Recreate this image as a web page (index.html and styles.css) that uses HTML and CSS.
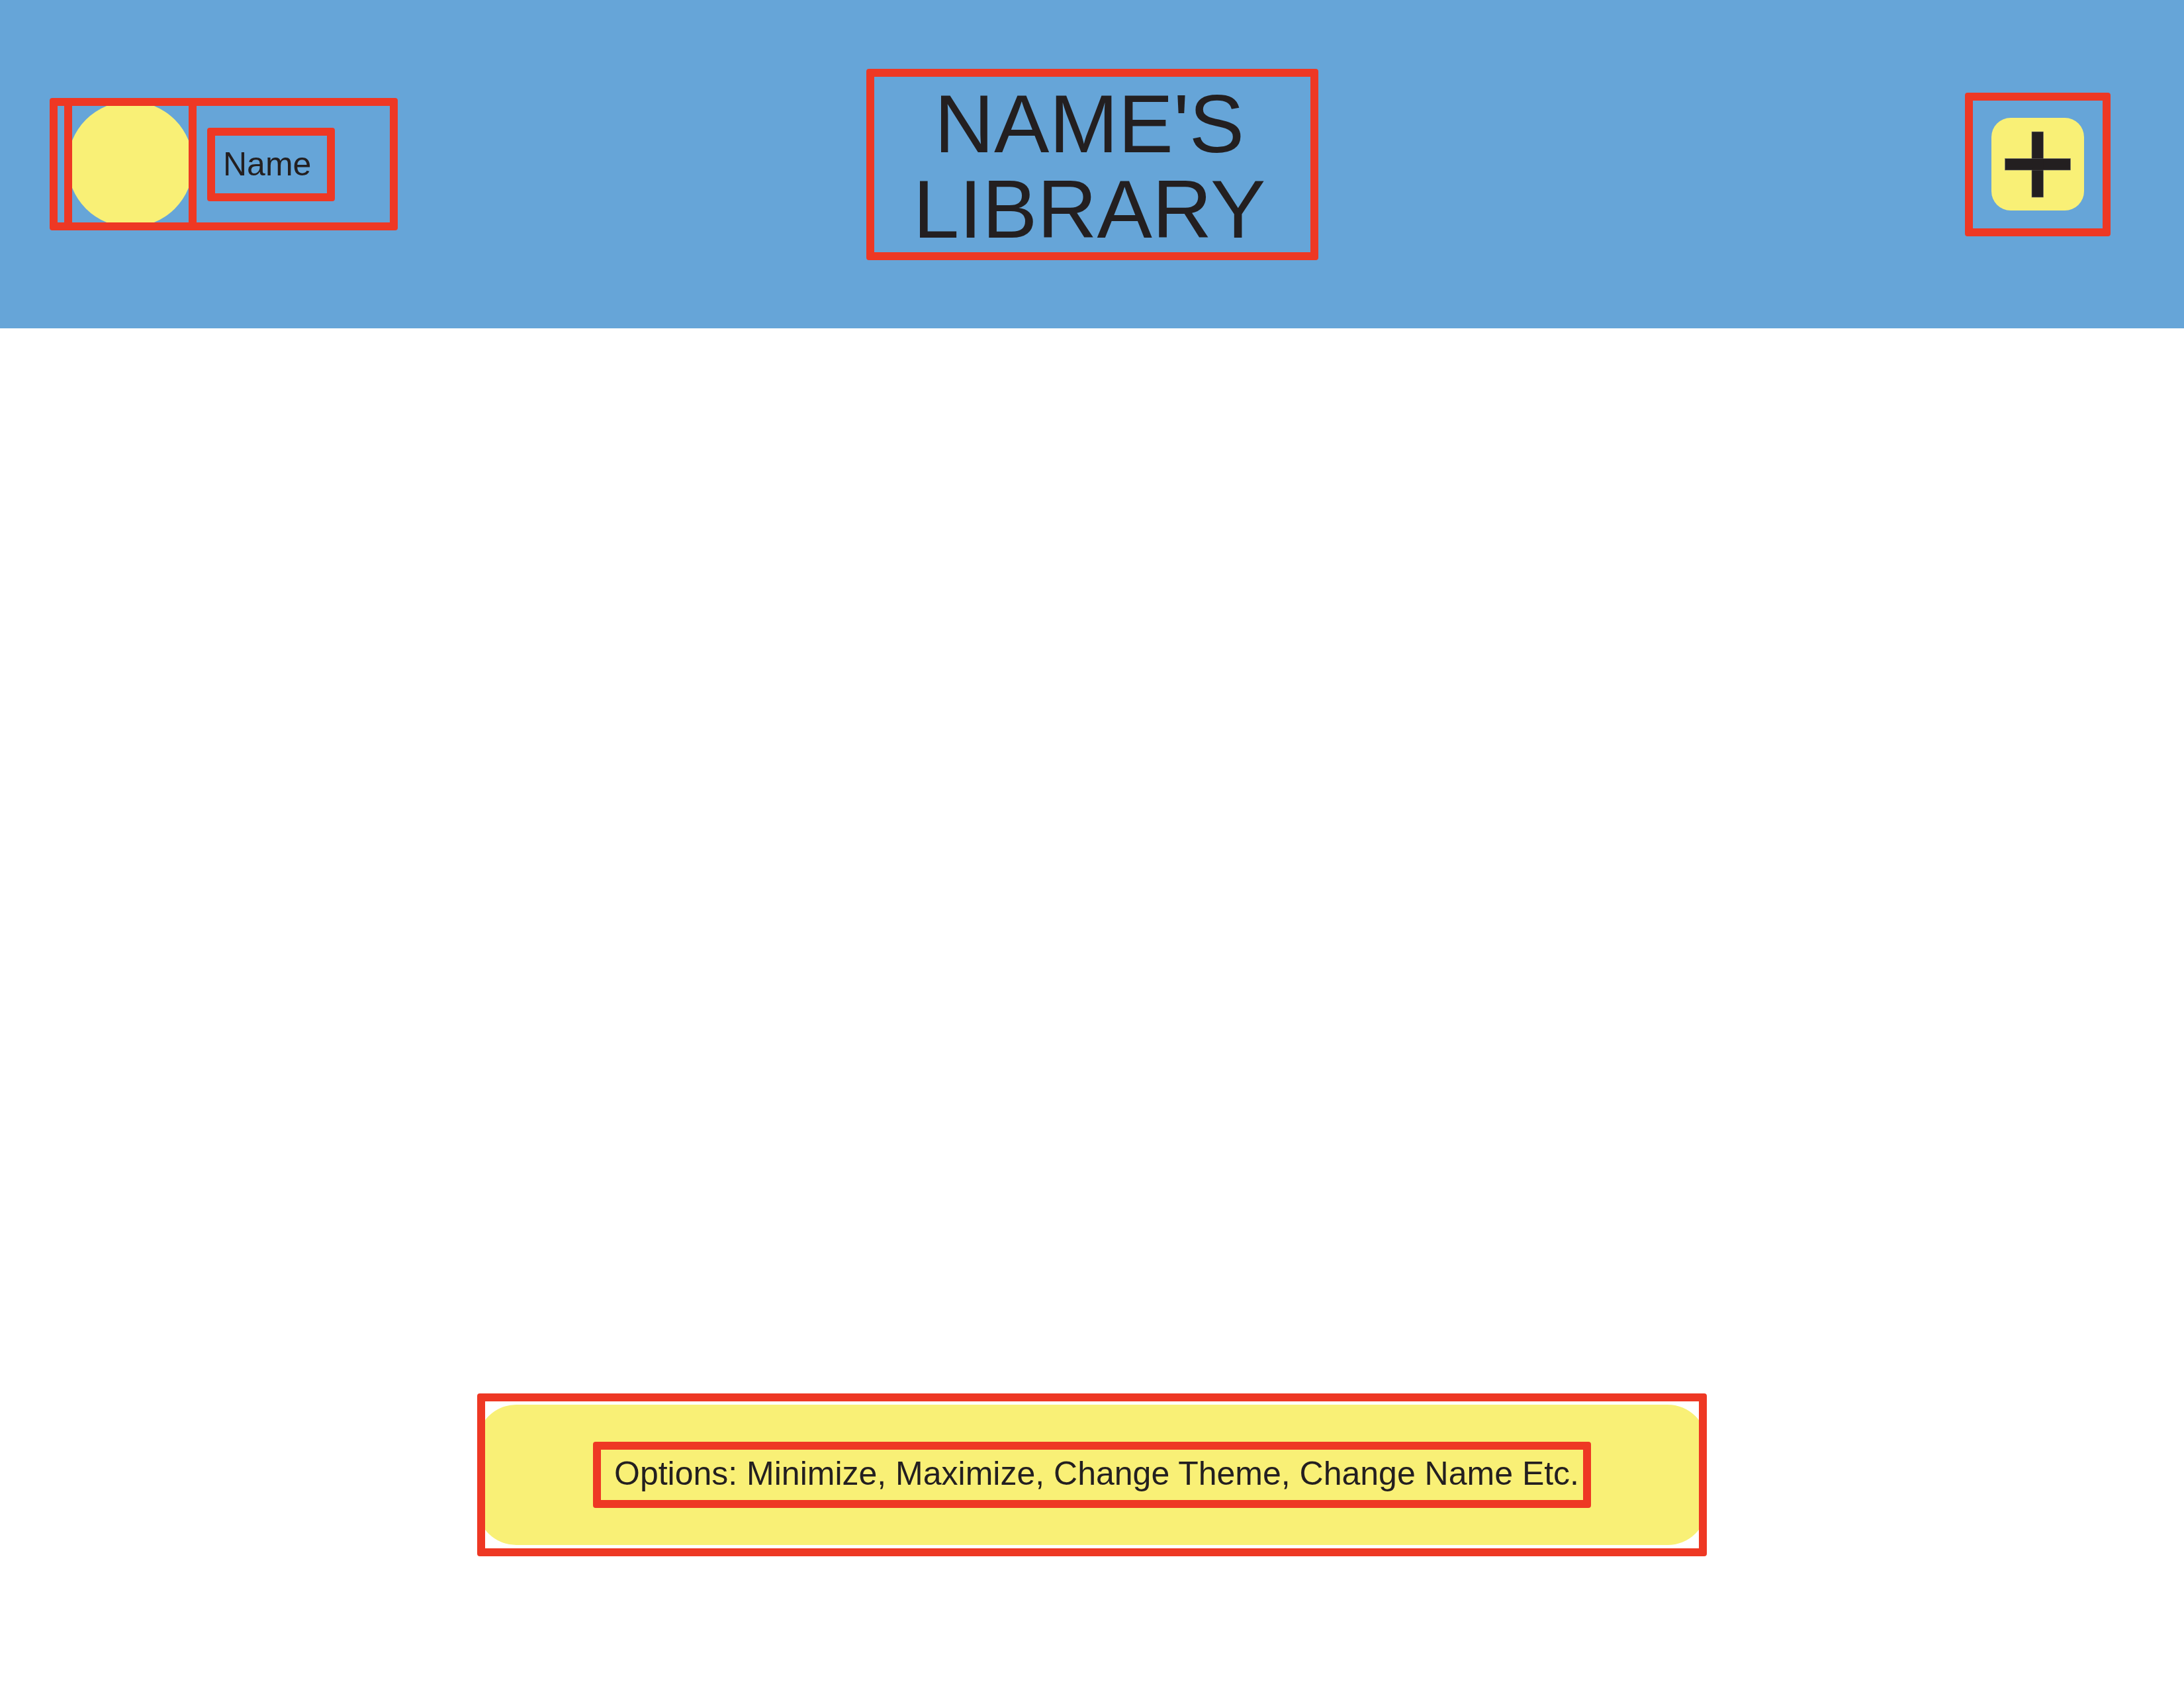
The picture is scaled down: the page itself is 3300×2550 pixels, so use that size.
FILE: index.html
```html
<!DOCTYPE html>
<html lang="en">
<head>
<meta charset="utf-8">
<title>Name's Library</title>
<link rel="stylesheet" href="styles.css">
</head>
<body>
<div class="page">
  <header class="header">
    <div class="profile">
      <div class="avatar-frame"><div class="avatar"></div></div>
      <div class="name-box">Name</div>
    </div>
    <div class="title-box"><h1 class="title">NAME'S<br>LIBRARY</h1></div>
    <div class="add-box">
      <button class="add-btn" type="button" aria-label="Add">
        <svg width="140" height="140" viewBox="0 0 140 140" aria-hidden="true">
          <rect x="61" y="21" width="17.5" height="99" fill="#231f20" stroke="#77787b" stroke-width="0.6"/>
          <rect x="20.5" y="61.5" width="99" height="17.5" fill="#231f20" stroke="#77787b" stroke-width="0.6"/>
          <rect x="61.3" y="61.8" width="16.9" height="16.9" fill="#231f20"/>
        </svg>
      </button>
    </div>
  </header>
  <main class="main"></main>
  <footer class="footer">
    <div class="options-box">
      <div class="options-pill">
        <div class="options-text">Options: Minimize, Maximize, Change Theme, Change Name Etc.</div>
      </div>
    </div>
  </footer>
</div>
</body>
</html>
```
FILE: styles.css
```css
html, body {
  margin: 0;
  padding: 0;
  background: #ffffff;
}

body {
  font-family: "Liberation Sans", Arial, sans-serif;
  color: #231f20;
}

.page {
  min-height: 100vh;
  display: flex;
  flex-direction: column;
}

.header {
  height: 496px;
  background: #66a5d8;
  display: grid;
  grid-template-columns: 1fr auto 1fr;
  align-items: center;
}

.profile {
  justify-self: start;
  margin-left: 75px;
  width: 526px;
  height: 200px;
  box-sizing: border-box;
  border: 12px solid #ee3824;
  border-radius: 4px;
  display: flex;
  align-items: center;
}

.avatar-frame {
  flex: none;
  width: 200px;
  height: 200px;
  margin: -12px 0 -12px 10px;
  box-sizing: border-box;
  border: 12px solid #ee3824;
  overflow: hidden;
  display: flex;
  align-items: center;
  justify-content: center;
}

.avatar {
  flex: none;
  width: 190px;
  height: 190px;
  border-radius: 50%;
  background: #f9f076;
}

.name-box {
  flex: none;
  margin-left: 16px;
  width: 193px;
  height: 111px;
  box-sizing: border-box;
  border: 12px solid #ee3824;
  border-radius: 4px;
  padding-left: 12px;
  display: flex;
  align-items: center;
  font-size: 50px;
}

.title-box {
  width: 683px;
  height: 289px;
  box-sizing: border-box;
  border: 12px solid #ee3824;
  border-radius: 4px;
  padding: 6px 8px 0 0;
  text-align: center;
}

.title {
  margin: 0;
  font-size: 125px;
  line-height: 129px;
  font-weight: normal;
}

.add-box {
  justify-self: end;
  margin-right: 111px;
  width: 220px;
  height: 217px;
  box-sizing: border-box;
  border: 12px solid #ee3824;
  border-radius: 4px;
  display: flex;
  align-items: center;
  justify-content: center;
}

.add-btn {
  width: 140px;
  height: 140px;
  padding: 0;
  border: none;
  border-radius: 29px;
  background: #f9f076;
  display: flex;
  align-items: center;
  justify-content: center;
}

.add-btn svg {
  display: block;
}

.main {
  flex: 1;
}

.footer {
  display: flex;
  justify-content: center;
  padding-bottom: 199px;
}

.options-box {
  width: 1858px;
  height: 246px;
  box-sizing: border-box;
  border: 12px solid #ee3824;
  border-radius: 4px;
  overflow: hidden;
  display: flex;
  align-items: center;
}

.options-pill {
  flex: none;
  width: 1858px;
  height: 212px;
  margin: 0 -12px;
  border-radius: 59px;
  background: #f9f076;
  display: flex;
  align-items: center;
  justify-content: center;
}

.options-text {
  width: 1508px;
  height: 100px;
  box-sizing: border-box;
  border: 12px solid #ee3824;
  border-radius: 4px;
  padding: 0 0 5px 20px;
  display: flex;
  align-items: center;
  font-size: 50px;
  white-space: nowrap;
}
```
